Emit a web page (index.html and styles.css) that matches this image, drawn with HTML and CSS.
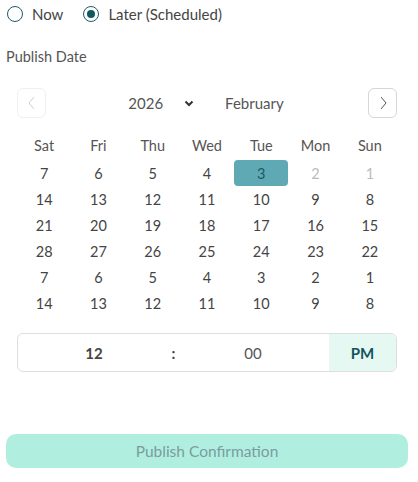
FILE: index.html
```html
<!DOCTYPE html>
<html>
<head>
<meta charset="utf-8">
<link rel="stylesheet" href="styles.css">
</head>
<body>
<div class="page">
  <div class="radios">
    <label class="radio"><span class="circle"></span><span class="radio-text">Now</span></label>
    <label class="radio"><span class="circle checked"></span><span class="radio-text">Later (Scheduled)</span></label>
  </div>
  <div class="label">Publish Date</div>
  <div class="picker">
    <div class="nav">
      <button class="nav-btn disabled"><svg width="12" height="14" viewBox="0 0 12 14"><path d="M8 1 L3 7 L8 13" fill="none" stroke="#cfcfcf" stroke-width="1"/></svg></button>
      <div class="ym">
        <span class="year">2026</span>
        <svg class="chev" width="10" height="7" viewBox="0 0 10 7"><path d="M1.5 1.5 L5 5 L8.5 1.5" fill="none" stroke="#333" stroke-width="2"/></svg>
        <span class="month">February</span>
      </div>
      <button class="nav-btn"><svg width="12" height="14" viewBox="0 0 12 14"><path d="M4 1 L9 7 L4 13" fill="none" stroke="#555" stroke-width="1"/></svg></button>
    </div>
    <div class="grid">
      <div class="dh">Sat</div><div class="dh">Fri</div><div class="dh">Thu</div><div class="dh">Wed</div><div class="dh">Tue</div><div class="dh">Mon</div><div class="dh">Sun</div>
      <div class="d">7</div><div class="d">6</div><div class="d">5</div><div class="d">4</div><div class="d sel">3</div><div class="d off">2</div><div class="d off">1</div>
      <div class="d">14</div><div class="d">13</div><div class="d">12</div><div class="d">11</div><div class="d">10</div><div class="d">9</div><div class="d">8</div>
      <div class="d">21</div><div class="d">20</div><div class="d">19</div><div class="d">18</div><div class="d">17</div><div class="d">16</div><div class="d">15</div>
      <div class="d">28</div><div class="d">27</div><div class="d">26</div><div class="d">25</div><div class="d">24</div><div class="d">23</div><div class="d">22</div>
      <div class="d">7</div><div class="d">6</div><div class="d">5</div><div class="d">4</div><div class="d">3</div><div class="d">2</div><div class="d">1</div>
      <div class="d">14</div><div class="d">13</div><div class="d">12</div><div class="d">11</div><div class="d">10</div><div class="d">9</div><div class="d">8</div>
    </div>
    <div class="time">
      <div class="t-hour">12</div>
      <div class="t-colon">:</div>
      <div class="t-min">00</div>
      <div class="t-ampm">PM</div>
    </div>
  </div>
  <button class="publish">Publish Confirmation</button>
</div>
</body>
</html>
```
FILE: styles.css
```css
html, body {
  margin: 0;
  padding: 0;
  background: #fff;
}
body {
  font-family: "Lato", "Noto Sans", sans-serif;
  color: #444;
  width: 418px;
}
.page {
  display: flex;
  flex-direction: column;
}
.radios {
  display: flex;
  align-items: center;
  height: 28px;
  padding-left: 7px;
  gap: 20px;
}
.radio {
  display: flex;
  align-items: center;
  gap: 9px;
  font-size: 15px;
  color: #444;
}
.circle {
  width: 16px;
  height: 16px;
  box-sizing: border-box;
  border: 1.5px solid #1b5e66;
  border-radius: 50%;
  display: flex;
  align-items: center;
  justify-content: center;
}
.circle.checked::after {
  content: "";
  width: 8px;
  height: 8px;
  border-radius: 50%;
  background: #0f5860;
}
.label {
  margin-top: 21px;
  padding-left: 6px;
  font-size: 14.5px;
  color: #555;
  height: 16px;
  line-height: 16px;
}
.picker {
  margin: 23px 21px 0 17px;
  display: flex;
  flex-direction: column;
}
.nav {
  display: flex;
  align-items: center;
  justify-content: space-between;
  height: 30px;
}
.nav-btn {
  width: 29px;
  height: 30px;
  box-sizing: border-box;
  border: 1px solid #d6d6d6;
  border-radius: 6px;
  background: #fff;
  display: flex;
  align-items: center;
  justify-content: center;
  padding: 0;
}
.nav-btn.disabled {
  border-color: #f0f0f0;
}
.ym {
  display: flex;
  align-items: center;
  font-size: 15px;
  color: #555;
  margin-left: -2px;
}
.chev {
  margin-left: 21px;
  margin-right: 31px;
}
.grid {
  display: grid;
  grid-template-columns: repeat(7, 1fr);
  grid-auto-rows: 26px;
  margin-top: 16px;
}
.dh {
  display: flex;
  align-items: center;
  justify-content: center;
  font-size: 14.5px;
  color: #555;
  margin-bottom: 3px;
}
.d {
  display: flex;
  align-items: center;
  justify-content: center;
  font-size: 14.5px;
  color: #444;
}
.d.off {
  color: #bbb;
}
.d.sel {
  background: #5ea9b4;
  color: #1f5a62;
  border-radius: 4px;
}
.time {
  margin-top: 17px;
  height: 39px;
  box-sizing: border-box;
  border: 1px solid #dedede;
  border-radius: 6px;
  display: flex;
  align-items: stretch;
  overflow: hidden;
  font-size: 15px;
}
.t-hour, .t-min {
  width: 152px;
  display: flex;
  align-items: center;
  justify-content: center;
}
.t-hour {
  font-weight: 700;
  color: #444;
}
.t-min {
  color: #555;
}
.t-colon {
  width: 7px;
  display: flex;
  align-items: center;
  justify-content: center;
  font-weight: 700;
  color: #444;
}
.t-ampm {
  flex: 1;
  background: #e5f8f2;
  color: #12545c;
  font-weight: 700;
  display: flex;
  align-items: center;
  justify-content: center;
}
.publish {
  margin: 62px 10px 0 6px;
  height: 34px;
  border: none;
  border-radius: 10px;
  background: #b0efe0;
  color: #7b9c9d;
  font-family: "Lato", "Noto Sans", sans-serif;
  font-size: 15.5px;
  padding: 0;
}
```
